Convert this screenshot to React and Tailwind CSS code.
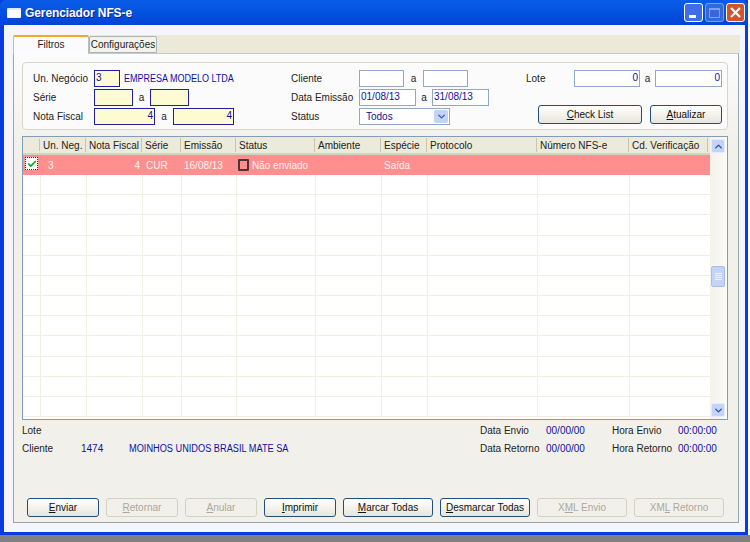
import { Check, ChevronUp, ChevronDown } from 'lucide-react'

const columns = [
  { label: 'Un. Neg.', head: 'w-[46px]', body: 'w-[46px]' },
  { label: 'Nota Fiscal', head: 'w-[56px]', body: 'w-[56px]' },
  { label: 'Série', head: 'w-[39px]', body: 'w-[39px]' },
  { label: 'Emissão', head: 'w-[55px]', body: 'w-[55px]' },
  { label: 'Status', head: 'w-[79px]', body: 'w-[79px]' },
  { label: 'Ambiente', head: 'w-[66px]', body: 'w-[66px]' },
  { label: 'Espécie', head: 'w-[46px]', body: 'w-[46px]' },
  { label: 'Protocolo', head: 'w-[110px]', body: 'w-[110px]' },
  { label: 'Número NFS-e', head: 'w-[92px]', body: 'w-[92px]' },
  { label: 'Cd. Verificação', head: 'w-[79px]', body: 'w-[81px]' },
]

function Field({ w, value, yellow, dark, right }) {
  return (
    <div className={`h-[17px] shrink-0 leading-[14px] px-[1px] text-[#1010a0] ${w} border ${dark ? 'border-[#2020a0]' : 'border-[#8fa8c4]'} ${yellow ? 'bg-[#fdfbd2]' : 'bg-white'} ${right ? 'text-right' : ''}`}>
      {value}
    </div>
  )
}

function Btn({ w, first, rest, before, disabled }) {
  return (
    <button className={`h-[19px] ${w} shrink-0 rounded-[3px] border leading-[15px] text-center ${disabled ? 'border-[#d4d1c0] bg-[#f2f0ea] text-[#aca899]' : 'border-[#1f4f7f] bg-gradient-to-b from-white to-[#e8e6da] text-[#111]'}`}>
      {before}<span className="underline">{first}</span>{rest}
    </button>
  )
}

function ScrollBtn({ children }) {
  return (
    <div className="h-[14px] w-[14px] shrink-0 rounded-[2px] bg-[#c3d3fa] border border-[#e4ebfc] flex items-center justify-center">
      {children}
    </div>
  )
}

export default function App() {
  return (
    <div className="w-[750px] h-[542px] bg-white overflow-hidden text-[10px] text-[#222]" style={{ fontFamily: '"Liberation Sans", "DejaVu Sans", sans-serif' }}>
      <div className="w-[748px] h-[535px] bg-[#0a3be0] flex flex-col">
        {/* Title bar */}
        <div className="h-[25px] shrink-0 flex items-center pl-[7px] pr-[3px] rounded-t-[6px] bg-gradient-to-b from-[#0a5ce8] via-[#0352e0] to-[#0343d6]">
          <div className="w-[14px] h-[10px] bg-white rounded-[1px] border-t-2 border-[#dfe8fb] mr-[4px]" />
          <span className="text-[12px] font-bold text-white tracking-[-0.1px] [text-shadow:1px_1px_#0f1f88]">Gerenciador NFS-e</span>
          <div className="ml-auto flex gap-[2px]">
            <div className="w-[19px] h-[19px] rounded-[3px] border border-white bg-[#3f6fe8] flex items-end pl-[4px] pb-[3px]">
              <div className="w-[7px] h-[3px] bg-white" />
            </div>
            <div className="w-[19px] h-[19px] rounded-[3px] border border-[#7f9fe8] bg-[#3566dc] flex items-center justify-center">
              <div className="w-[11px] h-[10px] border border-[#7f9fe8] border-t-2" />
            </div>
            <div className="w-[19px] h-[19px] rounded-[3px] border border-white bg-[#d8502c] flex items-center justify-center">
              <svg width="13" height="13" viewBox="0 0 13 13"><path d="M2 2 L11 11 M11 2 L2 11" stroke="#fff" strokeWidth="2.2" /></svg>
            </div>
          </div>
        </div>

        {/* Client area */}
        <div className="flex-1 ml-[4px] mr-[3px] mb-[3px] bg-[#f5f6fb] pt-[10px] pl-[9px] pr-[5px] pb-[9px] flex flex-col min-h-0">
          {/* Tabs */}
          <div className="h-[18px] shrink-0 flex bg-[#ece9d8]">
            <div className="w-[76px] h-[19px] bg-[#fbfbfd] border-t-2 border-t-[#f5a623] border-x border-[#b5bfc0] rounded-t-[2px] text-center leading-[15px] z-10">Filtros</div>
            <div className="w-[68px] h-[17px] mt-[1px] bg-[#f3f2ec] border border-[#a9b4b6] rounded-t-[2px] text-center leading-[15px] whitespace-nowrap">Configurações</div>
          </div>

          {/* Tab panel */}
          <div className="flex-1 min-h-0 mr-[1px] border border-[#97a6a8] border-t-[#c3cbcc] bg-gradient-to-b from-[#fcfcfe] to-[#f2f0eb] to-[90px] flex flex-col">
            {/* Filters */}
            <div className="h-[68px] shrink-0 mt-[8px] ml-[8px] mr-[10px] border border-[#d8d6c6] rounded-[4px] bg-[#fbfbfc] flex pl-[10px] pt-[7px]">
              <div className="w-[258px] shrink-0 flex flex-col gap-[2px]">
                <div className="flex items-center h-[17px]">
                  <span className="w-[61px]">Un. Negócio</span>
                  <Field w="w-[26px]" value="3" yellow dark />
                  <span className="ml-[4px] text-[#1010a0] whitespace-nowrap origin-left scale-x-[0.9]">EMPRESA MODELO LTDA</span>
                </div>
                <div className="flex items-center h-[17px]">
                  <span className="w-[61px]">Série</span>
                  <Field w="w-[39px]" yellow dark />
                  <span className="w-[17px] text-center">a</span>
                  <Field w="w-[39px]" yellow dark />
                </div>
                <div className="flex items-center h-[17px]">
                  <span className="w-[61px]">Nota Fiscal</span>
                  <Field w="w-[61px]" value="4" yellow dark right />
                  <span className="w-[18px] text-center">a</span>
                  <Field w="w-[61px]" value="4" yellow dark right />
                </div>
              </div>

              <div className="w-[235px] shrink-0 flex flex-col gap-[2px]">
                <div className="flex items-center h-[17px]">
                  <span className="w-[68px]">Cliente</span>
                  <Field w="w-[45px]" />
                  <span className="w-[19px] text-center">a</span>
                  <Field w="w-[45px]" />
                </div>
                <div className="flex items-center h-[17px]">
                  <span className="w-[68px]">Data Emissão</span>
                  <Field w="w-[57px]" value="01/08/13" />
                  <span className="w-[16px] text-center">a</span>
                  <Field w="w-[57px]" value="31/08/13" />
                </div>
                <div className="flex items-center h-[17px]">
                  <span className="w-[68px]">Status</span>
                  <div className="w-[91px] h-[17px] border border-[#8fa8c4] bg-white flex items-center pl-[6px] pr-[1px] text-[#1010a0]">
                    Todos
                    <div className="ml-auto w-[14px] h-[13px] rounded-[2px] bg-[#c3d3f8] flex items-center justify-center">
                      <ChevronDown size={11} strokeWidth={3} className="text-[#3d5a9a]" />
                    </div>
                  </div>
                </div>
              </div>

              <div className="flex-1 flex flex-col">
                <div className="flex items-center h-[17px]">
                  <span className="w-[48px]">Lote</span>
                  <Field w="w-[66px]" value="0" right />
                  <span className="w-[15px] text-center">a</span>
                  <Field w="w-[67px]" value="0" right />
                </div>
                <div className="flex mt-[18px] ml-[12px] gap-[8px]">
                  <Btn w="w-[104px]" first="C" rest="heck List" />
                  <Btn w="w-[72px]" first="A" rest="tualizar" />
                </div>
              </div>
            </div>

            {/* Grid */}
            <div className="h-[284px] shrink-0 mt-[6px] ml-[8px] mr-[10px] border border-[#7f9db9] bg-white flex">
              <div className="flex-1 min-w-0 flex flex-col overflow-hidden">
                <div className="h-[18px] shrink-0 flex items-stretch bg-[#ebeadb] border-b-2 border-[#d6d2c2] leading-[16px]">
                  <div className="w-[17px] shrink-0 my-[2px] border-r border-[#c7c5b2]" />
                  {columns.map(c => (
                    <div key={c.label} className={`${c.head} shrink-0 pl-[3px] my-[1px] border-r border-[#c7c5b2] whitespace-nowrap overflow-hidden`}>{c.label}</div>
                  ))}
                </div>
                <div className="h-5 shrink-0 flex items-center bg-[#ff8f8f] text-[#fff4f0]">
                  <div className="w-[18px] shrink-0 pl-[2px]">
                    <div className="w-[13px] h-[13px] mb-[3px] bg-white border border-dotted border-[#333] flex items-center justify-center">
                      <Check size={10} strokeWidth={4} className="text-[#12a512]" />
                    </div>
                  </div>
                  <div className="w-[46px] shrink-0 pl-[7px]">3</div>
                  <div className="w-[56px] shrink-0 text-right pr-[3px]">4</div>
                  <div className="w-[39px] shrink-0 pl-[3px]">CUR</div>
                  <div className="w-[55px] shrink-0 pl-[2px]">16/08/13</div>
                  <div className="w-[79px] shrink-0 pl-[1px] flex items-center gap-[3px]">
                    <div className="w-[11px] h-[12px] border-2 border-[#4a3438] rounded-[1px]" />
                    Não enviado
                  </div>
                  <div className="w-[66px] shrink-0" />
                  <div className="w-[46px] shrink-0 pl-[2px]">Saída</div>
                </div>
                <div className="h-[242px] flex flex-col">
                  {Array.from({ length: 12 }).map((_, i) => (
                    <div key={i} className="flex-1 flex border-b border-[#f1efe2]">
                      <div className="w-[18px] shrink-0 border-r border-[#f1efe2]" />
                      {columns.map(c => <div key={c.label} className={`${c.body} shrink-0 border-r border-[#f1efe2]`} />)}
                    </div>
                  ))}
                </div>
              </div>

              {/* Scrollbar */}
              <div className="w-[17px] shrink-0 pl-[1px] pt-[2px] pb-[2px] bg-gradient-to-r from-[#f3f3ea] to-[#fbfbf8] flex flex-col">
                <ScrollBtn><ChevronUp size={11} strokeWidth={3} className="text-[#2f4f8f]" /></ScrollBtn>
                <div className="h-[21px] w-[14px] mt-[113px] rounded-[2px] bg-[#c3d3fa] border border-[#a9bcec] flex flex-col items-center justify-center gap-[1px]">
                  <div className="w-[7px] h-[1px] bg-[#eef3fe]" />
                  <div className="w-[7px] h-[1px] bg-[#eef3fe]" />
                  <div className="w-[7px] h-[1px] bg-[#eef3fe]" />
                  <div className="w-[7px] h-[1px] bg-[#eef3fe]" />
                </div>
                <div className="mt-auto">
                  <ScrollBtn><ChevronDown size={11} strokeWidth={3} className="text-[#2f4f8f]" /></ScrollBtn>
                </div>
              </div>
            </div>

            {/* Footer info */}
            <div className="h-[36px] shrink-0 mt-[4px] ml-[8px] mr-[10px] flex flex-col gap-[5px]">
              <div className="flex h-[13px] items-center">
                <span className="w-[458px]">Lote</span>
                <span className="w-[66px]">Data Envio</span>
                <span className="w-[66px] text-[#1010a0]">00/00/00</span>
                <span className="w-[66px]">Hora Envio</span>
                <span className="text-[#1010a0]">00:00:00</span>
              </div>
              <div className="flex h-[13px] items-center">
                <span className="w-[59px]">Cliente</span>
                <span className="w-[48px] text-[#1010a0]">1474</span>
                <span className="w-[351px] text-[#1010a0] whitespace-nowrap origin-left scale-x-[0.92]">MOINHOS UNIDOS BRASIL MATE SA</span>
                <span className="w-[66px]">Data Retorno</span>
                <span className="w-[66px] text-[#1010a0]">00/00/00</span>
                <span className="w-[66px]">Hora Retorno</span>
                <span className="text-[#1010a0]">00:00:00</span>
              </div>
            </div>

            {/* Actions */}
            <div className="mt-[38px] ml-[13px] flex gap-[7px]">
              <Btn w="w-[72px]" first="E" rest="nviar" />
              <Btn w="w-[72px]" first="R" rest="etornar" disabled />
              <Btn w="w-[72px]" first="A" rest="nular" disabled />
              <Btn w="w-[72px]" first="I" rest="mprimir" />
              <Btn w="w-[90px]" first="M" rest="arcar Todas" />
              <Btn w="w-[90px]" first="D" rest="esmarcar Todas" />
              <Btn w="w-[90px]" before="X" first="M" rest="L Envio" disabled />
              <Btn w="w-[90px]" before="XM" first="L" rest=" Retorno" disabled />
            </div>
          </div>
        </div>
      </div>
      <div className="h-[7px] bg-[#808080]" />
    </div>
  )
}
